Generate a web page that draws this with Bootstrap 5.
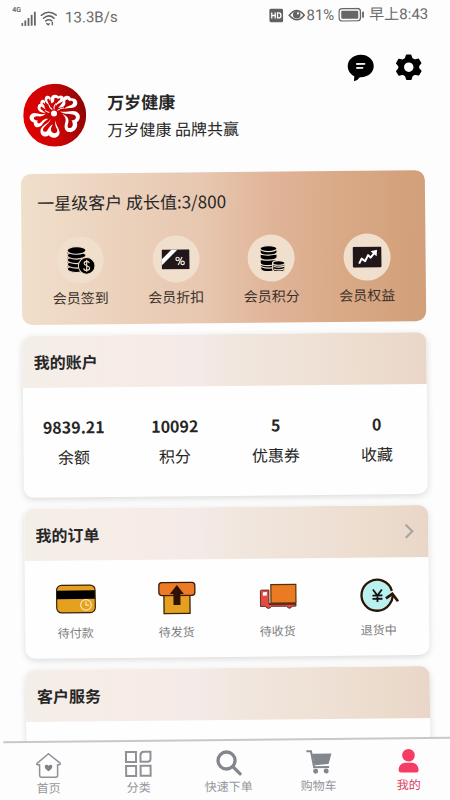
<!DOCTYPE html>
<html lang="zh-CN">
<head>
<meta charset="utf-8">
<meta name="viewport" content="width=device-width, initial-scale=1">
<title>我的 - 万岁健康</title>
<link href="https://cdn.jsdelivr.net/npm/bootstrap@5.3.0/dist/css/bootstrap.min.css" rel="stylesheet">
<style>
body { background: #fdfdfd; color: #262626; font-family: "Noto Sans CJK SC", sans-serif; font-size: 16px; line-height: 24px; }
svg { display: block; flex-shrink: 0; }
a { color: inherit; }
.tilted { transform: rotate(-0.56deg); }
.statusbar { height: 32px; padding: 0 18px 0 16px; font-family: Roboto, "Noto Sans CJK SC", sans-serif; font-size: 15px; color: #6a6a6a; }
.net-label { font-size: 7px; line-height: 8px; font-weight: 700; }
.tools { padding: 23px 24px 0; gap: 20px; }
.profile { padding: 0 26px; gap: 21px; margin-top: -1px; }
.profile h1 { font-size: 17px; line-height: 24px; }
.profile p { line-height: 22px; }
.stack { gap: 11px; padding: 27px 23px 0; }
.member { border-radius: 10px; padding: 16px 11px 17px; background: linear-gradient(91deg, #f0dfcb 0%, #ecd3be 22%, #e7c7b0 45%, #e0b498 62%, #d9a986 80%, #d19f79 100%); }
.member h2 { font-size: 17px; line-height: 25px; margin: 0 5px 22px; }
.member-label { font-size: 14px; line-height: 20px; margin-top: 4px; color: #3a302b; }
.disc { width: 47px; height: 47px; background: #f0dfcc; }
.panel { border-radius: 10px; background: #fefefe; box-shadow: 0 2px 6px rgba(60, 50, 50, .17); overflow: hidden; }
.panel-head { height: 52px; padding: 0 11px; background: linear-gradient(90deg, #f4eee9 0%, #f7ece6 25%, #f4eae7 42%, #f1e6dd 55%, #eee0d4 75%, #ebdbcb 90%, #ead6c9 100%); }
.panel-head h2 { font-size: 16px; line-height: 24px; }
.figures { padding: 27px 0 29px; }
.figures a { gap: 6px; }
.figures strong { font-size: 16px; }
.orders { padding: 18px 0 17px; }
.orders a { gap: 5px; font-size: 12px; line-height: 18px; color: #7d7d7d; }
.services { height: 98px; }
.tabbar { border-top: 2px solid #c8c8ca; background: #fdfdfd; padding: 8px 0 6px; font-size: 12px; line-height: 17px; color: #94969b; }
.tabbar .current { color: #d94360; }
</style>
</head>
<body class="overflow-hidden">
<div class="tilted vh-100 d-flex flex-column">

  <div class="statusbar d-flex align-items-center justify-content-between flex-shrink-0">
    <div class="d-flex align-items-center">
      <span class="net-label align-self-start">4G</span>
      <svg width="15" height="15" viewBox="0 0 15 15" fill="#666"><path d="M0 12h1.800v3H0zM3.100 9.500h1.800V15H3.100zM6.300 7h1.800v8H6.300zM9.500 4h1.800v11H9.500zM12.700 1h1.800v14h-1.800z"/></svg>
      <svg class="ms-1" width="17" height="15" viewBox="0 0 17 15" fill="none" stroke="#666" stroke-width="1.600" stroke-linecap="round"><path d="M1 4.500Q8.500-1.500 16 4.500M3.300 7.500Q8.500 3 13.700 7.500M5.500 10.200Q8.500 7.800 11.500 10.200"/><path d="M6.500 12.700 8 14.300 9 13M12 11.700v2.500" stroke-width="1.400"/></svg>
      <span class="ms-2">13.3B/s</span>
    </div>
    <div class="d-flex align-items-center">
      <svg width="14" height="14" viewBox="0 0 14 14"><rect width="14" height="14" rx="2" fill="#626262"/><path d="M2.500 4v6M6 4v6M2.500 7H6M8.300 4.500h1.200q2.200 0 2.200 2.500t-2.200 2.500H8.300z" stroke="#fff" stroke-width="1.300" fill="none"/></svg>
      <svg class="ms-1" width="19" height="14" viewBox="0 0 19 14"><path d="M2 7q7.500-9.500 15 0-7.500 9-15 0z" fill="none" stroke="#626262" stroke-width="1.600"/><circle cx="9.500" cy="6.500" r="3.800" fill="#626262"/><circle cx="10.700" cy="5.200" r="1.100" fill="#fff"/></svg>
      <span>81%</span>
      <svg class="ms-1 me-1" width="27" height="14" viewBox="0 0 27 14"><rect x=".8" y=".8" width="21.400" height="12.400" rx="3" fill="none" stroke="#666" stroke-width="1.300"/><rect x="3" y="3" width="17" height="8" rx="1" fill="#666"/><path d="M24.800 4v6" stroke="#666" stroke-width="1.800"/></svg>
      <span>早上8:43</span>
    </div>
  </div>

  <main class="flex-grow-1 overflow-hidden">
    <div class="tools d-flex justify-content-end">
      <button type="button" class="btn p-0 border-0" aria-label="消息">
        <svg width="28" height="28" viewBox="0 0 28 28"><path d="M14 1C6.500 1 1 6 1 12.500c0 4.500 2.500 8 6.500 10L7 27.500q4-.8 6-4C21 24 27 19 27 12.500S21.500 1 14 1z" fill="#000"/><path d="M9.500 10.300h9M9.500 14.300h7" stroke="#eee" stroke-width="1.800"/></svg>
      </button>
      <button type="button" class="btn p-0 border-0" aria-label="设置">
        <svg width="28" height="28" viewBox="0 0 28 28"><path fill-rule="evenodd" fill="#000" stroke="#000" stroke-width="1.500" stroke-linejoin="round" d="M12 2h4l1.200 3.500 2.800 1.600 3.700-.9 2.300 3.800-2.300 2.700v2.600L26 18l-2.300 3.800-3.700-.9-2.800 1.600L16 26h-4l-1.200-3.500L8 20.900l-3.700.9L2 18l2.300-2.700v-2.600L2 10l2.300-3.800 3.700.9 2.800-1.600zM14 8.500a5.500 5.500 0 1 0 0 11 5.500 5.500 0 0 0 0-11z"/></svg>
      </button>
    </div>

    <div class="profile d-flex align-items-center">
      <svg width="63" height="63" viewBox="25 24 188 188" role="img" aria-label="万岁健康">
        <defs><linearGradient id="red" x1="0" y1=".6" x2="1" y2=".4"><stop offset="0" stop-color="#e00000"/><stop offset=".5" stop-color="#cb0505"/><stop offset="1" stop-color="#8e0505"/></linearGradient></defs>
        <circle cx="119" cy="118" r="94" fill="url(#red)"/>
        <g fill="#fff">
          <path d="M106 130C101 143 76 148 76 165c0 17 16 20 25 13 8 13 33 8 32-9-1-13-12-20-11-35-4 8-1 18 3 25 5 10-6 18-14 10-7-7-2-17 2-24-9 4-13 13-17 19-7 8-16 1-11-7 5-9 20-16 21-27z"/>
          <path d="M134 107c18 5 35-5 49 1 16 8 13 26 2 32 5 17-10 31-23 29-17-2-15-20-11-31 3-9-4-18-9-23 10 4 19 11 18 22-1 7-7 19 3 20 11 1 12-14 6-23 12 1 18-10 9-16-11-6-28 0-44-11z"/>
          <path d="M129 97c6-7 11-11 14-19-1-18 17-23 25-10 14-2 23 10 17 21-8 11-25 6-38 11 7-8 17-9 24-13 8-7 0-14-8-10-4-10-14-5-12 3 2 6-4 13-9 15z"/>
          <path d="M110 83c-6-12-2-26 10-26 7 0 11 5 11 5 11-7 21 5 13 14-6 7-15 5-22 16 0-9 7-14 12-18 6-5 0-9-5-4-4-6-12-5-11 2 0 5 0 7-8 11z"/>
          <path d="M103 88c-8-5-17-15-12-24 5-8 15-4 17 3l-3 8c-2-6-5-7-7-5-3 4 4 11 5 18zM92 101c-9-5-18-14-15-24 3-8 13-7 14 1l-2 7c-2-5-5-5-6-2-1 5 7 11 9 18z"/>
          <path d="M91 111c-17 0-26-11-22-21 4-9 15-9 19-1l2 6c-6-4-11-5-13 0-2 6 7 8 14 16z"/>
          <path d="M92 113C73 120 61 105 50 114c-11 8-6 22 6 25 0 13 10 19 20 12 8-6 10-15 23-22-13-2-17 7-24 12-7 4-10-2-7-8-10 1-13-6-10-10 9-6 22 5 34-10z"/>
        </g>
        <path d="M112 101c-5-3-9-8-10-14M103 110c-6-1-10-3-13-7M118 101c-2-7 1-14 6-18M127 104c6-4 12-8 20-7" fill="none" stroke="#fff" stroke-width="3"/>
        <circle cx="117" cy="113" r="9" fill="#fff"/>
      </svg>
      <div>
        <h1 class="fw-bold mb-1">万岁健康</h1>
        <p class="mb-0">万岁健康 品牌共赢</p>
      </div>
    </div>

    <div class="stack d-flex flex-column">
      <section class="member">
        <h2 class="fw-normal">一星级客户 成长值:3/800</h2>
        <div class="row g-0 text-center">
          <a href="#" class="col d-flex flex-column align-items-center text-decoration-none">
            <span class="disc rounded-circle d-flex align-items-center justify-content-center">
              <svg width="30" height="30" viewBox="0 0 30 30"><path d="M2 4v20q0 3 9 3h5V4z"/><g fill="#000" stroke="#eddac6" stroke-width="1.200"><ellipse cx="11" cy="23.500" rx="9.500" ry="3.600"/><ellipse cx="11" cy="19" rx="9.500" ry="3.600"/><ellipse cx="11" cy="14.500" rx="9.500" ry="3.600"/><ellipse cx="11" cy="10" rx="9.500" ry="3.600"/><ellipse cx="11" cy="5" rx="9.500" ry="3.800"/></g><circle cx="21" cy="20.500" r="8.300" stroke="#eddac6"/><path d="M23.700 17.800q-.6-1.800-2.700-1.800-2.500 0-2.500 2.200c0 2.800 5.400 1.600 5.400 4.500 0 2.300-2.300 2.400-2.900 2.400-2.400 0-2.900-1.600-3-2.200M21 14.500v12" fill="none" stroke="#eddac6" stroke-width="1.200"/></svg>
            </span>
            <span class="member-label">会员签到</span>
          </a>
          <a href="#" class="col d-flex flex-column align-items-center text-decoration-none">
            <span class="disc rounded-circle d-flex align-items-center justify-content-center">
              <svg width="28" height="20" viewBox="0 0 28 20"><rect width="28" height="20" rx="1" fill="#21171a"/><path d="M0 10 10 0h6L0 16z" fill="#fff"/><g fill="none" stroke="#f2e8df" stroke-width="1.200"><circle cx="16" cy="9.500" r="1.700"/><circle cx="21" cy="13.500" r="1.700"/><path d="m20.500 7.500-4 8"/></g></svg>
            </span>
            <span class="member-label">会员折扣</span>
          </a>
          <a href="#" class="col d-flex flex-column align-items-center text-decoration-none">
            <span class="disc rounded-circle d-flex align-items-center justify-content-center">
              <svg width="26" height="28" viewBox="0 0 26 28"><g stroke="#f0dfcc" stroke-width="1.200"><path d="M2 21v3c0 4 16 4 16 0v-3z"/><ellipse cx="10" cy="20.500" rx="8.500" ry="3"/><path d="M1.500 15v3c0 4 17 4 17 0v-3z"/><path d="M1.500 9.500v3c0 4 17 4 17 0v-3z"/><path d="M1.500 4v3.500c0 4 17 4 17 0V4z"/><ellipse cx="10" cy="4" rx="8.500" ry="3"/><path d="M14 18v7c0 3 12 3 12 0v-7z"/><path d="M15 21.700q5 2 10.500 0M15 24.500q5 2 10.500 0" fill="none"/><ellipse cx="20" cy="18.500" rx="6" ry="2.300"/></g></svg>
            </span>
            <span class="member-label">会员积分</span>
          </a>
          <a href="#" class="col d-flex flex-column align-items-center text-decoration-none">
            <span class="disc rounded-circle d-flex align-items-center justify-content-center">
              <svg width="29" height="21" viewBox="0 0 29 21"><rect width="29" height="21" rx="1.500" fill="#21171a"/><path d="m6.500 17 2.500-5 3.500 2.500 3-6 2.500 2.500 4-5" fill="none" stroke="#fff" stroke-width="2" stroke-linejoin="round"/><path d="m18 4.800 6.500-1.500-.5 6.500z" fill="#fff"/></svg>
            </span>
            <span class="member-label">会员权益</span>
          </a>
        </div>
      </section>

      <section class="panel">
        <div class="panel-head d-flex align-items-center"><h2 class="fw-bold mb-0">我的账户</h2></div>
        <div class="figures row g-0 text-center">
          <a href="#" class="col d-flex flex-column text-decoration-none"><strong>9839.21</strong><span>余额</span></a>
          <a href="#" class="col d-flex flex-column text-decoration-none"><strong>10092</strong><span>积分</span></a>
          <a href="#" class="col d-flex flex-column text-decoration-none"><strong>5</strong><span>优惠券</span></a>
          <a href="#" class="col d-flex flex-column text-decoration-none"><strong>0</strong><span>收藏</span></a>
        </div>
      </section>

      <section class="panel">
        <div class="panel-head d-flex align-items-center justify-content-between">
          <h2 class="fw-bold mb-0">我的订单</h2>
          <a href="#" aria-label="查看全部订单"><svg width="14" height="16" viewBox="0 0 14 16"><path d="m3 2 6 6-6 6" fill="none" stroke="#a9a4a1" stroke-width="2.200" stroke-linecap="round"/></svg></a>
        </div>
        <div class="orders row g-0 text-center">
          <a href="#" class="col d-flex flex-column align-items-center text-decoration-none">
            <svg width="40" height="40" viewBox="0 0 40 40"><rect x=".7" y="6.700" width="38.600" height="27.600" rx="5" fill="#e6a020" stroke="#3b2109" stroke-width="1.200"/><path d="M1 12h38v8.500H1z" fill="#000"/><circle cx="30" cy="26.500" r="5.300" fill="none" stroke="#fae6b4" stroke-width="1.200"/><path d="M30 23v3.800h3" fill="none" stroke="#fae6b4" stroke-width="1.200"/></svg>
            待付款
          </a>
          <a href="#" class="col d-flex flex-column align-items-center text-decoration-none">
            <svg width="40" height="40" viewBox="0 0 40 40"><path d="M7 16h26v20H7z" fill="#e6a020" stroke="#3b2109" stroke-width="1.300"/><rect x="2" y="5" width="36" height="13" rx="3" fill="#ed7a25" stroke="#3b1a09" stroke-width="1.300"/><path d="m20 7.500 7 9h-3.500v11h-7v-11H13z" fill="#2e1204"/></svg>
            待发货
          </a>
          <a href="#" class="col d-flex flex-column align-items-center text-decoration-none">
            <svg width="40" height="40" viewBox="0 0 40 40"><path d="M2.500 14.500q0-1 1-1H11v14h27v2.300h-3.500q-3 4-6 0H13.500q-3 4-6 0h-5z" fill="#e04c40" stroke="#55201a" stroke-width=".9"/><path d="M11 27.500h27" stroke="#55201a" stroke-width="1.500"/><path d="M13 8h25v18.500H13z" fill="#ea7b22" stroke="#57300d" stroke-width="1.200"/><path d="M5 15.500h4v3.500H5z" fill="#fff"/></svg>
            待收货
          </a>
          <a href="#" class="col d-flex flex-column align-items-center text-decoration-none">
            <svg width="40" height="40" viewBox="0 0 40 40"><circle cx="18" cy="19.500" r="15.500" fill="#baf1ef"/><path d="M33 15.500A15.500 15.500 0 1 0 30.500 29q3-4 3.500-9" fill="none" stroke="#2c1305" stroke-width="2.300"/><path d="m27 23 6.500-4.500L39 26" fill="none" stroke="#2c1305" stroke-width="2.600"/><path d="m14 14 4.500 6 4.500-6M18.500 20v6.500M13.500 20h10M13.500 23.300h10" fill="none" stroke="#111" stroke-width="1.800"/></svg>
            退货中
          </a>
        </div>
      </section>

      <section class="panel">
        <div class="panel-head d-flex align-items-center"><h2 class="fw-bold mb-0">客户服务</h2></div>
        <div class="services"></div>
      </section>
    </div>
  </main>

  <nav class="tabbar flex-shrink-0" aria-label="主导航">
    <div class="row g-0 text-center">
      <a href="#" class="col d-flex flex-column align-items-center text-decoration-none">
        <svg width="28" height="28" viewBox="0 0 28 28"><path d="M14 3 2.500 12.500q-.8 1.500.8 1.500H5v10.500q0 2 2 2h14q2 0 2-2V14h1.700q1.600 0 .8-1.500z" fill="none" stroke="#8f9197" stroke-width="1.500" stroke-linejoin="round"/><path d="M14 20.500c-6-4-3.500-7-1.600-6.500q1.300.2 1.600 1.300.3-1.100 1.600-1.300c1.900-.5 4.400 2.500-1.600 6.500z" fill="#7f8187"/></svg>
        首页
      </a>
      <a href="#" class="col d-flex flex-column align-items-center text-decoration-none">
        <svg width="28" height="28" viewBox="0 0 28 28" fill="none" stroke="#8f9197" stroke-width="2"><path d="M1.500 2h10v10h-10zM1.500 16h10v10h-10zM16 16h10v10H16zM26 2h-6.500Q16 2 16 5.500V12h7q3 0 3-3z"/></svg>
        分类
      </a>
      <a href="#" class="col d-flex flex-column align-items-center text-decoration-none">
        <svg width="28" height="28" viewBox="0 0 28 28" fill="none" stroke="#83868c" stroke-width="3.300" stroke-linecap="round"><circle cx="12" cy="11.500" r="8.500"/><path d="m18.500 18 7 7"/></svg>
        快速下单
      </a>
      <a href="#" class="col d-flex flex-column align-items-center text-decoration-none">
        <svg width="28" height="28" viewBox="0 0 28 28" fill="#83868c"><path d="M7.500 5.500H27l-3 10.500-14 1z"/><path d="M2 3h4.500l3 16H24.500" fill="none" stroke="#83868c" stroke-width="2"/><circle cx="11" cy="23" r="2.500"/><circle cx="21.500" cy="23" r="2.500"/></svg>
        购物车
      </a>
      <a href="#" class="current col d-flex flex-column align-items-center text-decoration-none" aria-current="page">
        <svg width="28" height="28" viewBox="0 0 28 28" fill="#f63c65"><circle cx="14" cy="8" r="6.300"/><path d="M4 23c0-5 3.500-7.500 7-7.500h6c3.500 0 7 2.500 7 7.500q0 2.300-2.500 2.300h-15Q4 25.300 4 23z"/></svg>
        我的
      </a>
    </div>
  </nav>
</div>
<script src="https://cdn.jsdelivr.net/npm/bootstrap@5.3.0/dist/js/bootstrap.bundle.min.js"></script>
</body>
</html>
